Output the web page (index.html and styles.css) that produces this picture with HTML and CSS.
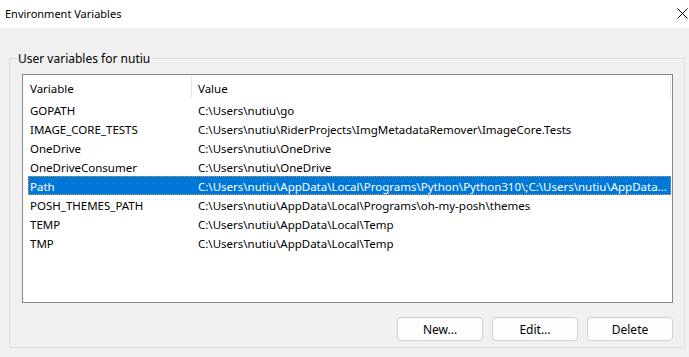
FILE: index.html
```html
<!DOCTYPE html>
<html lang="en">
<head>
    <meta charset="UTF-8">
    <title>Environment Variables</title>
    <link rel="stylesheet" href="styles.css">
</head>
<body>
<div class="titlebar">
    <span class="title">Environment Variables</span>
    <svg class="close" width="11" height="11" viewBox="0 0 11 11">
        <path d="M0.5 0.5 L10.5 10.5 M10.5 0.5 L0.5 10.5" stroke="#000" stroke-width="1" fill="none"/>
    </svg>
</div>

<div class="dialog">
    <fieldset class="group">
        <legend>User variables for nutiu</legend>

        <div class="listview">
            <div class="header">
                <div class="col-name">Variable</div>
                <div class="col-value">Value</div>
            </div>
            <div class="row"><div class="col-name">GOPATH</div><div class="col-value">C:\Users\nutiu\go</div></div>
            <div class="row"><div class="col-name">IMAGE_CORE_TESTS</div><div class="col-value">C:\Users\nutiu\RiderProjects\ImgMetadataRemover\ImageCore.Tests</div></div>
            <div class="row"><div class="col-name">OneDrive</div><div class="col-value">C:\Users\nutiu\OneDrive</div></div>
            <div class="row"><div class="col-name">OneDriveConsumer</div><div class="col-value">C:\Users\nutiu\OneDrive</div></div>
            <div class="row selected"><div class="col-name">Path</div><div class="col-value">C:\Users\nutiu\AppData\Local\Programs\Python\Python310\;C:\Users\nutiu\AppData...</div></div>
            <div class="row"><div class="col-name">POSH_THEMES_PATH</div><div class="col-value">C:\Users\nutiu\AppData\Local\Programs\oh-my-posh\themes</div></div>
            <div class="row"><div class="col-name">TEMP</div><div class="col-value">C:\Users\nutiu\AppData\Local\Temp</div></div>
            <div class="row"><div class="col-name">TMP</div><div class="col-value">C:\Users\nutiu\AppData\Local\Temp</div></div>
        </div>

        <div class="buttons">
            <button>New...</button>
            <button>Edit...</button>
            <button>Delete</button>
        </div>
    </fieldset>
</div>
</body>
</html>
```

FILE: styles.css
```css
body {
    margin: 0;
    width: 689px;
    height: 357px;
    overflow: hidden;
    background-color: #f0f0f0;
    font-family: "Segoe UI", "Noto Sans", "Liberation Sans", sans-serif;
    font-size: 12px;
    color: #000;
}
.titlebar {
    height: 28px;
    background-color: #fff;
    display: flex;
    align-items: center;
    justify-content: space-between;
    padding: 0 1px 2px 5px;
    box-sizing: border-box;
}
.title {
    font-size: 11px;
}
.dialog {
    padding: 22px 4px 0 9px;
}
.group {
    margin: 0;
    min-width: 0;
    width: 676px;
    height: 298px;
    padding: 7px 11px 0 12px;
    border: 1px solid #dcdcdc;
    box-sizing: border-box;
}
.group legend {
    padding: 0 2px 0 1px;
    margin-left: -5px;
}
.listview {
    height: 229px;
    background-color: #fff;
    border: 1px solid #828790;
    box-sizing: border-box;
    padding: 0 1px 0 5px;
    overflow: hidden;
    font-size: 11.5px;
}
.header, .row {
    display: flex;
    height: 19px;
    align-items: center;
}
.header {
    height: 24px;
    margin-bottom: 1px;
    padding-top: 2px;
    box-sizing: border-box;
    position: relative;
}
.header .col-value {
    border-left: 1px solid #e5e5e5;
    height: 22px;
    margin-top: -2px;
    padding-top: 2px;
    box-sizing: border-box;
    display: flex;
    align-items: center;
    padding-left: 6px;
}
.header::after {
    content: "";
    position: absolute;
    right: 0;
    top: 1px;
    height: 23px;
    border-right: 1px solid #e5e5e5;
}
.col-name {
    width: 163px;
    padding-left: 2px;
    box-sizing: border-box;
    white-space: nowrap;
}
.col-value {
    flex: 1;
    min-width: 0;
    padding-left: 7px;
    white-space: nowrap;
    overflow: hidden;
}
.row {
    padding-top: 1px;
    box-sizing: border-box;
}
.row.selected {
    background-color: #0078d7;
    color: #fff;
    outline: 1px dotted #c89a60;
    outline-offset: -1px;
}
.buttons {
    display: flex;
    justify-content: flex-end;
    gap: 9px;
    margin-top: 14px;
}
button {
    width: 86px;
    height: 24px;
    background-color: #fdfdfd;
    border: 1px solid #d0d0d0;
    border-radius: 4px;
    font-family: inherit;
    font-size: 12px;
    color: #000;
    padding: 0;
}
```
